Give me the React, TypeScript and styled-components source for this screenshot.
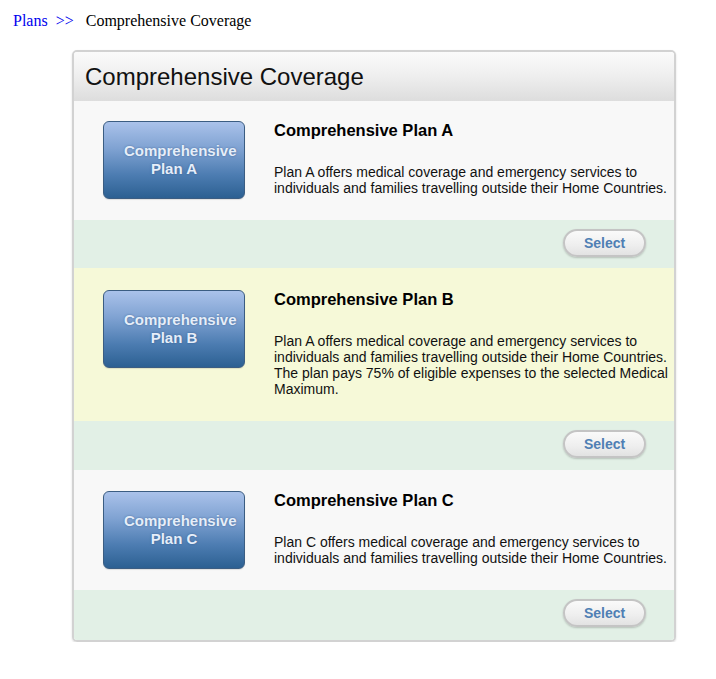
import React from "react";
import styled, { createGlobalStyle } from "styled-components";

const GlobalStyle = createGlobalStyle`
  html, body { margin: 0; padding: 0; background: #ffffff; }
  body { font-family: "Liberation Serif", "Times New Roman", serif; }
`;

const Page = styled.div`
  padding: 10px 0 0 0;
  width: 716px;
`;

const Breadcrumb = styled.div`
  display: flex;
  align-items: center;
  padding-left: 13px;
  height: 21px;
  font-family: "Liberation Serif", "Times New Roman", serif;
  font-size: 16px;
  color: #000;
`;

const Crumb = styled.a`
  color: #0000ee;
  text-decoration: none;
`;

const Sep = styled.span`
  color: #0000ee;
  margin: 0 12px 0 8px;
`;

const Panel = styled.div`
  margin: 19px 0 0 72px;
  width: 600px;
  border: 2px solid #d2d2d2;
  border-radius: 5px;
  box-shadow: 0 1px 2px rgba(0, 0, 0, 0.15);
  overflow: hidden;
  font-family: "Liberation Sans", Arial, Helvetica, sans-serif;
`;

const Header = styled.div`
  height: 49px;
  display: flex;
  align-items: center;
  padding-left: 11px;
  background: linear-gradient(to bottom, #fbfbfb 0%, #eeeeee 50%, #dddddd 100%);
  font-size: 24px;
  color: #111;
`;

const PlanRow = styled.div<{ $bg: string; $top: number }>`
  display: flex;
  align-items: flex-start;
  padding: ${(p) => p.$top}px 2px 21px 29px;
  background: ${(p) => p.$bg};
`;

const PlanButton = styled.div`
  flex: 0 0 auto;
  box-sizing: border-box;
  width: 142px;
  height: 78px;
  padding: 0 20px;
  border: 1px solid #3b5d82;
  border-radius: 6px;
  background: linear-gradient(to bottom, #aac2ea 0%, #7fa2d2 35%, #4c7cb1 70%, #2c6092 100%);
  display: flex;
  flex-direction: column;
  justify-content: center;
  color: #e6eef9;
  font-size: 15px;
  font-weight: bold;
  line-height: 18px;
  text-align: center;
  white-space: nowrap;
  text-shadow: 0 0 2px rgba(40, 80, 130, 0.7);
  box-shadow: 0 1px 1px rgba(0, 0, 0, 0.1);
`;

const ButtonLine = styled.span`
  display: block;
`;

const TextCol = styled.div`
  flex: 1;
  margin-left: 29px;
  padding-bottom: 3px;
`;

const PlanTitle = styled.div`
  font-weight: bold;
  font-size: 16.5px;
  line-height: 18px;
  color: #000;
  margin-bottom: 25px;
`;

const PlanDesc = styled.div`
  font-size: 14px;
  line-height: 16px;
  color: #111;
`;

const Footer = styled.div<{ $h: number }>`
  height: ${(p) => p.$h}px;
  display: flex;
  justify-content: flex-end;
  align-items: flex-start;
  padding: 9px 28px 0 0;
  box-sizing: border-box;
  background: #e2f0e6;
`;

const SelectButton = styled.button`
  width: 83px;
  height: 28px;
  border-radius: 14px;
  border: 2px solid #c4c4c4;
  background: linear-gradient(to bottom, #fafafa 0%, #eeeeee 60%, #e2e2e2 100%);
  box-shadow: 0 1px 2px rgba(0, 0, 0, 0.2);
  font-family: "Liberation Sans", Arial, Helvetica, sans-serif;
  font-weight: bold;
  font-size: 14px;
  color: #4f7fb4;
  cursor: pointer;
  padding: 0;
`;

const plans = [
  {
    letter: "A",
    bg: "#f8f8f8",
    top: 20,
    footer: 48,
    desc:
      "Plan A offers medical coverage and emergency services to individuals and families travelling outside their Home Countries.",
  },
  {
    letter: "B",
    bg: "#f6f9d8",
    top: 22,
    footer: 49,
    desc:
      "Plan A offers medical coverage and emergency services to individuals and families travelling outside their Home Countries. The plan pays 75% of eligible expenses to the selected Medical Maximum.",
  },
  {
    letter: "C",
    bg: "#f8f8f8",
    top: 21,
    footer: 50,
    desc:
      "Plan C offers medical coverage and emergency services to individuals and families travelling outside their Home Countries.",
  },
];

export default function App() {
  return (
    <>
      <GlobalStyle />
      <Page>
        <Breadcrumb>
          <Crumb href="#">Plans</Crumb>
          <Sep>&gt;&gt;</Sep>
          <span>Comprehensive Coverage</span>
        </Breadcrumb>
        <Panel>
          <Header>Comprehensive Coverage</Header>
          {plans.map((p) => (
            <React.Fragment key={p.letter}>
              <PlanRow $bg={p.bg} $top={p.top}>
                <PlanButton>
                  <ButtonLine>Comprehensive</ButtonLine>
                  <ButtonLine>Plan {p.letter}</ButtonLine>
                </PlanButton>
                <TextCol>
                  <PlanTitle>Comprehensive Plan {p.letter}</PlanTitle>
                  <PlanDesc>{p.desc}</PlanDesc>
                </TextCol>
              </PlanRow>
              <Footer $h={p.footer}>
                <SelectButton>Select</SelectButton>
              </Footer>
            </React.Fragment>
          ))}
        </Panel>
      </Page>
    </>
  );
}
